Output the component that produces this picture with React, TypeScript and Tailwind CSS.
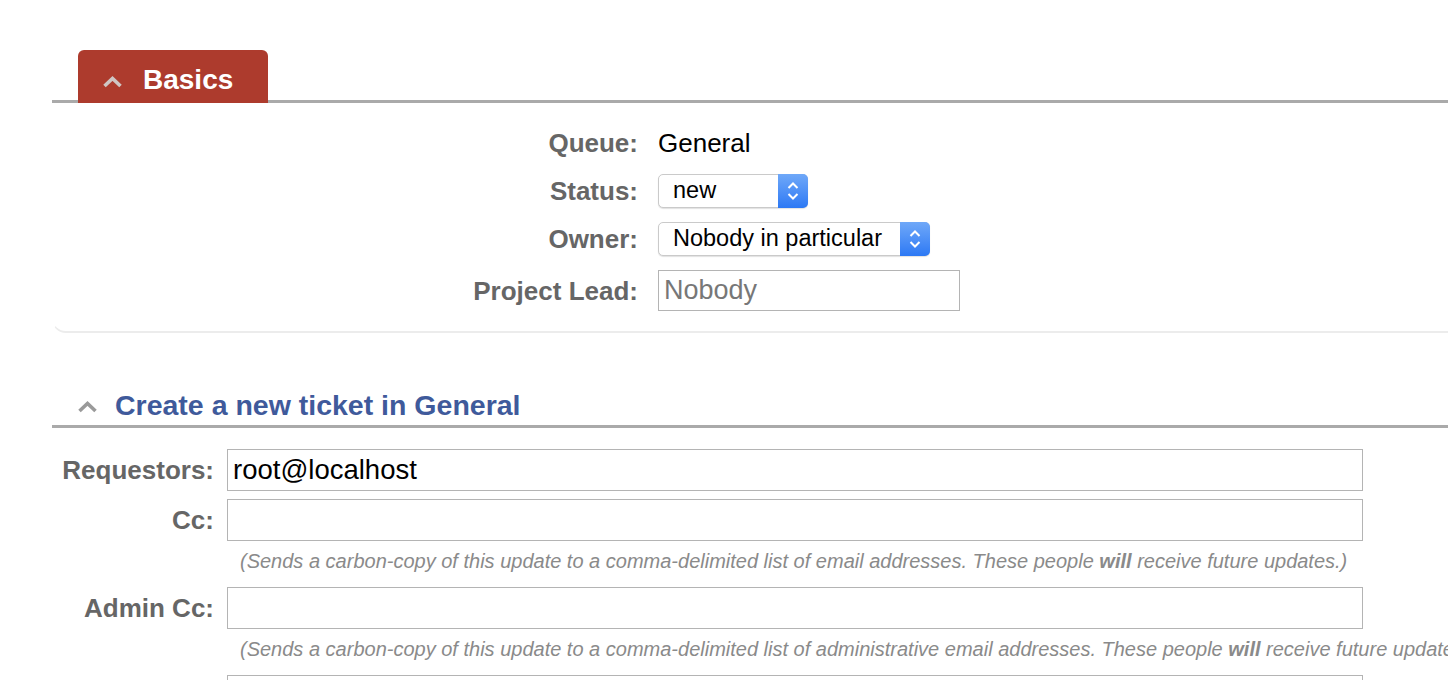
import React from 'react';

const Chevron: React.FC<{ color: string }> = ({ color }) => (
  <svg width="21" height="13" viewBox="0 0 21 13" className="shrink-0">
    <polyline points="2.5,11 10.5,3.5 18.5,11" fill="none" stroke={color} strokeWidth="3.6" />
  </svg>
);

const MacSelect: React.FC<{ value: string; width: string }> = ({ value, width }) => (
  <div
    className={`flex h-[34px] ${width} rounded-[5px] border border-[#cacaca] bg-white shadow-[0_1px_1px_rgba(0,0,0,0.12)]`}
  >
    <div className="flex flex-1 items-center pl-[14px] text-[23.5px] leading-none text-black">{value}</div>
    <div className="-my-px -mr-px flex w-[30px] items-center justify-center rounded-r-[5px] bg-gradient-to-b from-[#6fa8f8] to-[#2c78f4]">
      <svg width="14" height="22" viewBox="0 0 14 22">
        <polyline points="2.5,8 7,3.5 11.5,8" fill="none" stroke="white" strokeWidth="2" />
        <polyline points="2.5,14 7,18.5 11.5,14" fill="none" stroke="white" strokeWidth="2" />
      </svg>
    </div>
  </div>
);

const Label: React.FC<{ children: React.ReactNode }> = ({ children }) => (
  <div className="flex items-center justify-end text-[26px] font-bold leading-none text-[#666]">{children}</div>
);

const HelpText: React.FC<{ kind: string }> = ({ kind }) => (
  <div className="h-[30px] whitespace-nowrap pl-[13px] text-[20px] italic leading-[24px] text-[#8a8a8a]">
    (Sends a carbon-copy of this update to a comma-delimited list of {kind}email addresses. These people{' '}
    <b>will</b> receive future updates.)
  </div>
);

const TextBox: React.FC<{ value?: string }> = ({ value }) => (
  <div className="flex h-[42px] w-[1136px] items-center border border-[#b4b4b4] bg-white pl-[5px] text-[27.5px] leading-none text-black">
    {value}
  </div>
);

export default function App() {
  return (
    <div className="h-[680px] w-[1448px] overflow-hidden bg-white pl-[52px] pt-[50px] font-['Liberation_Sans',Arial,sans-serif]">
      {/* Basics */}
      <div className="flex border-b-[3px] border-[#aaa] pl-[26px]">
        <div className="-mb-[3px] flex h-[53px] w-[190px] items-start rounded-t-[6px] bg-[#ad3b2d] pl-[24px] pt-[16px]">
          <div className="mt-[9px]">
            <Chevron color="#cfc6c4" />
          </div>
          <span className="ml-[20px] text-[28px] font-bold leading-[28px] text-white">Basics</span>
        </div>
      </div>
      <div className="grid grid-cols-[585px_1fr] gap-x-[20px] gap-y-[14px] rounded-bl-[14px] border-b-2 border-l border-[#ececec] border-l-transparent pb-[20px] pt-[23px]">
        <Label>Queue:</Label>
        <div className="flex h-[34px] items-center text-[26px] leading-none text-black">General</div>
        <Label>Status:</Label>
        <MacSelect value="new" width="w-[150px]" />
        <Label>Owner:</Label>
        <MacSelect value="Nobody in particular" width="w-[272px]" />
        <Label>Project Lead:</Label>
        <div className="flex h-[41px] w-[302px] items-center border border-[#b4b4b4] pl-[5px] text-[27px] leading-none text-[#777]">
          Nobody
        </div>
      </div>

      {/* Create ticket */}
      <div className="mt-[58px] flex items-center border-b-[3px] border-[#aaa] pb-[6px] pl-[25px]">
        <div className="mt-[3px]">
          <Chevron color="#9a9a9a" />
        </div>
        <span className="ml-[17px] text-[28.5px] font-bold leading-[28px] text-[#3f5a9b]">
          Create a new ticket in General
        </span>
      </div>
      <div className="grid grid-cols-[162px_1fr] gap-x-[13px] gap-y-[8px] pt-[21px]">
        <Label>Requestors:</Label>
        <TextBox value="root@localhost" />
        <Label>Cc:</Label>
        <TextBox />
        <div />
        <HelpText kind="" />
        <Label>Admin Cc:</Label>
        <TextBox />
        <div />
        <HelpText kind="administrative " />
        <div />
        <TextBox />
      </div>
    </div>
  );
}
